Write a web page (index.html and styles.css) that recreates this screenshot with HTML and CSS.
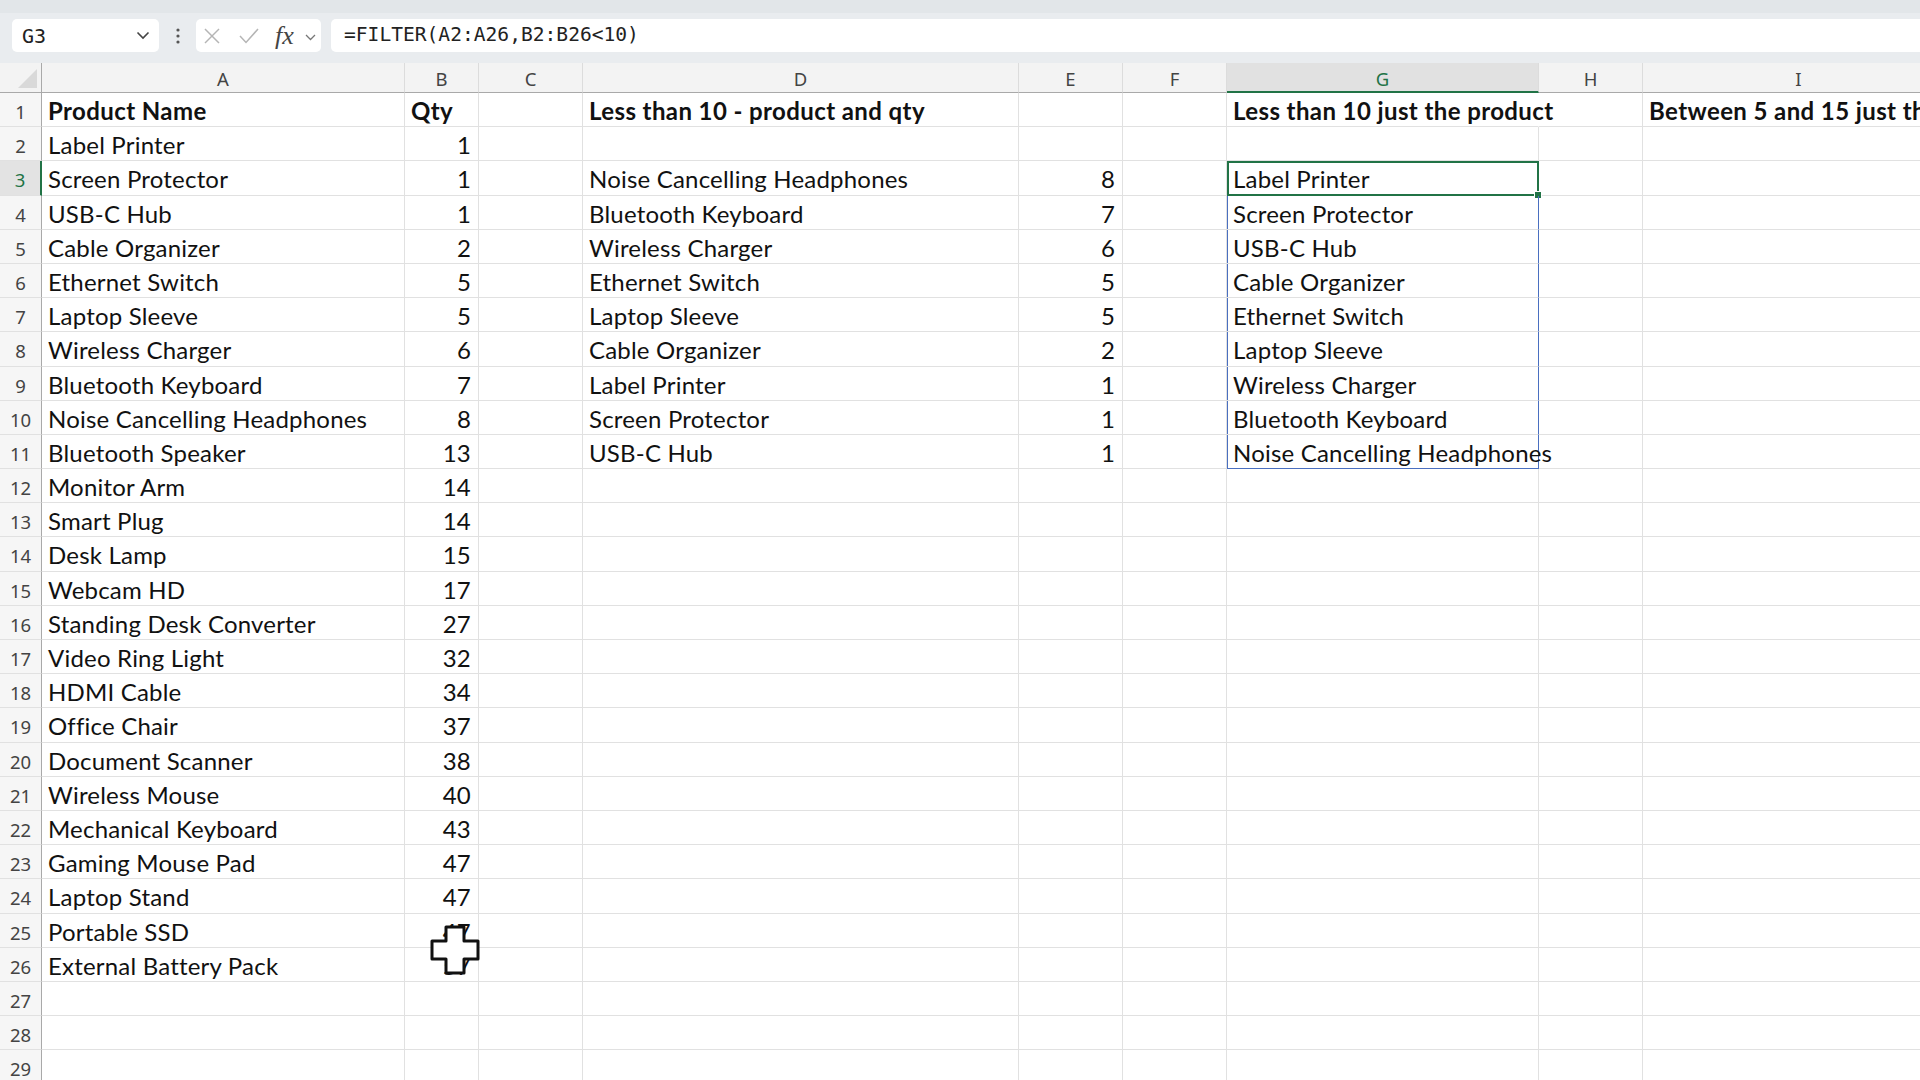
FILE: index.html
```html
<!DOCTYPE html>
<html lang="en">

<head>
    <meta charset="UTF-8">
    <meta name="viewport" content="width=device-width, initial-scale=1.0">
    <title>FILTER - Book1</title>
    <link rel="stylesheet" href="styles.css">
</head>

<body>
    <div class="formula-bar">
        <div class="name-box">
            <span>G3</span>
            <svg class="chev" width="14" height="9" viewBox="0 0 14 9"><polyline points="1.5,1.5 7,7 12.5,1.5" /></svg>
        </div>
        <div class="dots">
            <svg width="4" height="16" viewBox="0 0 4 16"><circle cx="2" cy="2" r="1.6" /><circle cx="2" cy="8" r="1.6" /><circle cx="2" cy="14" r="1.6" /></svg>
        </div>
        <div class="fx-buttons">
            <svg class="btn-x" width="18" height="18" viewBox="0 0 18 18"><line x1="2" y1="2" x2="16" y2="16" /><line x1="16" y1="2" x2="2" y2="16" /></svg>
            <svg class="btn-ok" width="22" height="18" viewBox="0 0 22 18"><polyline points="2,9 8,15.5 20,2" /></svg>
            <span class="fx">fx</span>
            <svg class="chev small" width="11" height="7" viewBox="0 0 11 7"><polyline points="1,1 5.5,5.5 10,1" /></svg>
        </div>
        <div class="formula">=FILTER(A2:A26,B2:B26&lt;10)</div>
    </div>

    <div class="sheet">
        <div class="ch corner"></div><div class="ch">A</div><div class="ch">B</div><div class="ch">C</div><div class="ch">D</div><div class="ch">E</div><div class="ch">F</div><div class="ch on">G</div><div class="ch">H</div><div class="ch">I</div>

        <div class="rh">1</div><div class="c b">Product Name</div><div class="c b">Qty</div><div class="c"></div><div class="c b">Less than 10 - product and qty</div><div class="c"></div><div class="c"></div><div class="c b over">Less than 10 just the product</div><div class="c"></div><div class="c b">Between 5 and 15 just the product</div>
        <div class="rh">2</div><div class="c">Label Printer</div><div class="c n">1</div><div class="c"></div><div class="c"></div><div class="c"></div><div class="c"></div><div class="c"></div><div class="c"></div><div class="c"></div>
        <div class="rh on">3</div><div class="c">Screen Protector</div><div class="c n">1</div><div class="c"></div><div class="c">Noise Cancelling Headphones</div><div class="c n">8</div><div class="c"></div><div class="c spill sel">Label Printer</div><div class="c"></div><div class="c"></div>
        <div class="rh">4</div><div class="c">USB-C Hub</div><div class="c n">1</div><div class="c"></div><div class="c">Bluetooth Keyboard</div><div class="c n">7</div><div class="c"></div><div class="c spill">Screen Protector</div><div class="c"></div><div class="c"></div>
        <div class="rh">5</div><div class="c">Cable Organizer</div><div class="c n">2</div><div class="c"></div><div class="c">Wireless Charger</div><div class="c n">6</div><div class="c"></div><div class="c spill">USB-C Hub</div><div class="c"></div><div class="c"></div>
        <div class="rh">6</div><div class="c">Ethernet Switch</div><div class="c n">5</div><div class="c"></div><div class="c">Ethernet Switch</div><div class="c n">5</div><div class="c"></div><div class="c spill">Cable Organizer</div><div class="c"></div><div class="c"></div>
        <div class="rh">7</div><div class="c">Laptop Sleeve</div><div class="c n">5</div><div class="c"></div><div class="c">Laptop Sleeve</div><div class="c n">5</div><div class="c"></div><div class="c spill">Ethernet Switch</div><div class="c"></div><div class="c"></div>
        <div class="rh">8</div><div class="c">Wireless Charger</div><div class="c n">6</div><div class="c"></div><div class="c">Cable Organizer</div><div class="c n">2</div><div class="c"></div><div class="c spill">Laptop Sleeve</div><div class="c"></div><div class="c"></div>
        <div class="rh">9</div><div class="c">Bluetooth Keyboard</div><div class="c n">7</div><div class="c"></div><div class="c">Label Printer</div><div class="c n">1</div><div class="c"></div><div class="c spill">Wireless Charger</div><div class="c"></div><div class="c"></div>
        <div class="rh">10</div><div class="c">Noise Cancelling Headphones</div><div class="c n">8</div><div class="c"></div><div class="c">Screen Protector</div><div class="c n">1</div><div class="c"></div><div class="c spill">Bluetooth Keyboard</div><div class="c"></div><div class="c"></div>
        <div class="rh">11</div><div class="c">Bluetooth Speaker</div><div class="c n">13</div><div class="c"></div><div class="c">USB-C Hub</div><div class="c n">1</div><div class="c"></div><div class="c spill last">Noise Cancelling Headphones</div><div class="c"></div><div class="c"></div>
        <div class="rh">12</div><div class="c">Monitor Arm</div><div class="c n">14</div><div class="c"></div><div class="c"></div><div class="c"></div><div class="c"></div><div class="c"></div><div class="c"></div><div class="c"></div>
        <div class="rh">13</div><div class="c">Smart Plug</div><div class="c n">14</div><div class="c"></div><div class="c"></div><div class="c"></div><div class="c"></div><div class="c"></div><div class="c"></div><div class="c"></div>
        <div class="rh">14</div><div class="c">Desk Lamp</div><div class="c n">15</div><div class="c"></div><div class="c"></div><div class="c"></div><div class="c"></div><div class="c"></div><div class="c"></div><div class="c"></div>
        <div class="rh">15</div><div class="c">Webcam HD</div><div class="c n">17</div><div class="c"></div><div class="c"></div><div class="c"></div><div class="c"></div><div class="c"></div><div class="c"></div><div class="c"></div>
        <div class="rh">16</div><div class="c">Standing Desk Converter</div><div class="c n">27</div><div class="c"></div><div class="c"></div><div class="c"></div><div class="c"></div><div class="c"></div><div class="c"></div><div class="c"></div>
        <div class="rh">17</div><div class="c">Video Ring Light</div><div class="c n">32</div><div class="c"></div><div class="c"></div><div class="c"></div><div class="c"></div><div class="c"></div><div class="c"></div><div class="c"></div>
        <div class="rh">18</div><div class="c">HDMI Cable</div><div class="c n">34</div><div class="c"></div><div class="c"></div><div class="c"></div><div class="c"></div><div class="c"></div><div class="c"></div><div class="c"></div>
        <div class="rh">19</div><div class="c">Office Chair</div><div class="c n">37</div><div class="c"></div><div class="c"></div><div class="c"></div><div class="c"></div><div class="c"></div><div class="c"></div><div class="c"></div>
        <div class="rh">20</div><div class="c">Document Scanner</div><div class="c n">38</div><div class="c"></div><div class="c"></div><div class="c"></div><div class="c"></div><div class="c"></div><div class="c"></div><div class="c"></div>
        <div class="rh">21</div><div class="c">Wireless Mouse</div><div class="c n">40</div><div class="c"></div><div class="c"></div><div class="c"></div><div class="c"></div><div class="c"></div><div class="c"></div><div class="c"></div>
        <div class="rh">22</div><div class="c">Mechanical Keyboard</div><div class="c n">43</div><div class="c"></div><div class="c"></div><div class="c"></div><div class="c"></div><div class="c"></div><div class="c"></div><div class="c"></div>
        <div class="rh">23</div><div class="c">Gaming Mouse Pad</div><div class="c n">47</div><div class="c"></div><div class="c"></div><div class="c"></div><div class="c"></div><div class="c"></div><div class="c"></div><div class="c"></div>
        <div class="rh">24</div><div class="c">Laptop Stand</div><div class="c n">47</div><div class="c"></div><div class="c"></div><div class="c"></div><div class="c"></div><div class="c"></div><div class="c"></div><div class="c"></div>
        <div class="rh">25</div><div class="c">Portable SSD</div><div class="c n">47</div><div class="c"></div><div class="c"></div><div class="c"></div><div class="c"></div><div class="c"></div><div class="c"></div><div class="c"></div>
        <div class="rh">26</div><div class="c">External Battery Pack</div><div class="c n">57</div><div class="c"></div><div class="c"></div><div class="c"></div><div class="c"></div><div class="c"></div><div class="c"></div><div class="c"></div>
        <div class="rh">27</div><div class="c"></div><div class="c"></div><div class="c"></div><div class="c"></div><div class="c"></div><div class="c"></div><div class="c"></div><div class="c"></div><div class="c"></div>
        <div class="rh">28</div><div class="c"></div><div class="c"></div><div class="c"></div><div class="c"></div><div class="c"></div><div class="c"></div><div class="c"></div><div class="c"></div><div class="c"></div>
        <div class="rh">29</div><div class="c"></div><div class="c"></div><div class="c"></div><div class="c"></div><div class="c"></div><div class="c"></div><div class="c"></div><div class="c"></div><div class="c"></div>
    </div>

    <!-- mouse pointer over B25/B26 -->
    <svg class="pointer" width="52" height="52" viewBox="0 0 52 52">
        <path d="M16 2 H34 V16 H48 V34 H34 V48 H16 V34 H2 V16 H16 Z" />
    </svg>
</body>

</html>
```

FILE: styles.css
```css
html,
body {
    margin: 0;
    overflow: hidden;
}

body {
    background-color: #e9ecef;
    font-family: 'Lato', 'Noto Sans', sans-serif;
    position: relative;
}

/* formula bar */

.formula-bar {
    display: flex;
    align-items: center;
    height: 63px;
    box-sizing: border-box;
    padding: 4px 0 9px 12px;
    border-top: 13px solid #e2e6e9;
}

.name-box {
    width: 147px;
    height: 33px;
    box-sizing: border-box;
    display: flex;
    align-items: center;
    justify-content: space-between;
    padding: 0 9px 0 10px;
    background-color: #fff;
    border-radius: 5px;
    font-family: 'DejaVu Sans Mono', monospace;
    font-size: 20px;
    color: #222;
}

.chev {
    fill: none;
    stroke: #444;
    stroke-width: 1.6;
}

.chev.small {
    stroke: #777;
    stroke-width: 1.3;
}

.dots {
    width: 37px;
    display: flex;
    justify-content: center;
    fill: #555;
}

.fx-buttons {
    width: 125px;
    height: 33px;
    box-sizing: border-box;
    display: flex;
    align-items: center;
    padding-left: 7px;
    background-color: #fff;
    border-radius: 5px;
}

.btn-x,
.btn-ok {
    fill: none;
    stroke: #b5b5b5;
    stroke-width: 1.5;
}

.btn-ok {
    margin-left: 17px;
}

.fx {
    font-family: 'Liberation Serif', serif;
    font-style: italic;
    font-size: 26px;
    line-height: 30px;
    color: #444;
    margin-left: 15px;
}

.chev.small {
    margin-left: 11px;
    margin-top: 3px;
}

.formula {
    flex: 1;
    height: 33px;
    margin-left: 10px;
    padding-left: 13px;
    background-color: #fff;
    border-radius: 5px 0 0 5px;
    font-family: 'DejaVu Sans Mono', monospace;
    font-size: 19.6px;
    line-height: 31px;
    color: #222;
}

/* grid: the last column runs past the window, as in Excel */

.sheet {
    display: grid;
    grid-template-columns: 42px 363px 74px 104px 436px 104px 104px 312px 104px 312px;
    grid-template-rows: 30px;
    grid-auto-rows: 34.2px;
    width: 100%;
    overflow: hidden;
    background-color: #fff;
}

.ch,
.rh {
    font-family: 'Noto Sans', sans-serif;
    font-size: 18.5px;
    color: #444;
    text-align: center;
    box-sizing: border-box;
}

.ch {
    background-color: #f3f3f3;
    border-right: 1px solid #dcdcdc;
    border-bottom: 1px solid #a9a9a9;
    line-height: 31px;
}

.ch.corner {
    position: relative;
    border-right-color: #a9a9a9;
}

.ch.corner::after {
    content: "";
    position: absolute;
    right: 4px;
    bottom: 4px;
    border-left: 19px solid transparent;
    border-bottom: 19px solid #d9d9d9;
}

.ch.on {
    background-color: #e1e1e1;
    color: #217346;
    border-bottom: 2px solid #217346;
}

.rh {
    background-color: #f6f6f6;
    border-right: 1px solid #a9a9a9;
    border-bottom: 1px solid #e1e1e1;
    padding-top: 2px;
    line-height: 33px;
}

.rh.on {
    background-color: #e3e3e3;
    color: #217346;
    border-right: 2px solid #217346;
}

.c {
    box-sizing: border-box;
    border-right: 1px solid #e1e1e1;
    border-bottom: 1px solid #e1e1e1;
    padding: 2px 7px 0 6px;
    font-size: 24px;
    letter-spacing: 0.2px;
    line-height: 31px;
    white-space: nowrap;
    color: #111;
}

.c.b {
    font-weight: bold;
    letter-spacing: 0.4px;
}

.c.n {
    text-align: right;
}

/* text running into the empty cell next door hides the gridline */
.c.over {
    border-right-color: transparent;
}

/* FILTER spill range */
.c.spill {
    position: relative;
    border-right-color: #4a6fc0;
    box-shadow: inset 1px 0 0 #4a6fc0;
}

.c.spill.last {
    border-bottom-color: #4a6fc0;
}

.c.sel {
    outline: 2px solid #217346;
    outline-offset: -2px;
}

.c.sel::after {
    content: "";
    position: absolute;
    right: -4px;
    bottom: -4px;
    width: 6px;
    height: 6px;
    background-color: #217346;
    border: 1px solid #fff;
}

.pointer {
    position: absolute;
    left: 430px;
    top: 925px;
    fill: #fff;
    stroke: #111;
    stroke-width: 3;
    stroke-linejoin: round;
}
```
